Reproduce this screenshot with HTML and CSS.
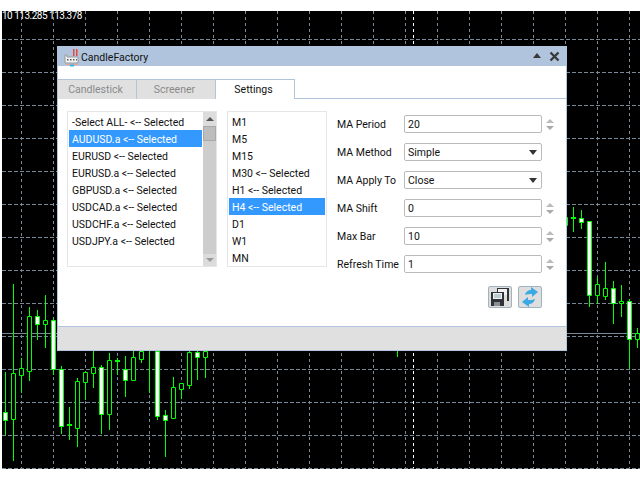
FILE: index.html
```html
<!DOCTYPE html>
<html lang="en">
<head>
    <meta charset="UTF-8">
    <title>CandleFactory</title>
    <link rel="stylesheet" href="styles.css">
</head>
<body>
    <!-- chart behind the dialog -->
    <svg class="chart" width="640" height="480" viewBox="0 0 640 480">
        <rect class="chartBg" x="2" y="11" width="638" height="458"/>
        <path class="gridV" d="M21.5 11V468M53.5 11V468M85.5 11V468M117.5 11V468M149.5 11V468M181.5 11V468M213.5 11V468M245.5 11V468M277.5 11V468M309.5 11V468M341.5 11V468M373.5 11V468M405.5 11V468M437.5 11V468M469.5 11V468M501.5 11V468M533.5 11V468M565.5 11V468M597.5 11V468M629.5 11V468"/>
        <path class="gridH" d="M2 39.5H640M2 72.5H640M2 105.5H640M2 138.5H640M2 171.5H640M2 204.5H640M2 237.5H640M2 270.5H640M2 303.5H640M2 336.5H640M2 369.5H640M2 402.5H640M2 435.5H640M2 468.5H640"/>
        <path class="priceLine" d="M2 333.5H640"/>
        <path class="timeLine" d="M413.5 11V468"/>
        <path class="wick" d="M5.5 372V435M13.5 284V461M21.5 358V393M29.5 307V381M37.5 310V340M45.5 295V348M53.5 318V375M61.5 366V434M69.5 407V440M77.5 378V447M85.5 372V400M93.5 351V388M101.5 365V434M109.5 353V430M117.5 358V375M125.5 356V397M133.5 351V380M141.5 351V363M149.5 351V393M157.5 351V420M165.5 410V457M173.5 377V418M181.5 383V399M189.5 351V389M197.5 351V380M205.5 351V378M397.5 351V357M573.5 207V232M581.5 210V229M589.5 221V307M597.5 277V304M605.5 262V300M613.5 281V324M621.5 285V317M629.5 299V369M637.5 328V348"/>
        <path class="bull" d="M11.5 373.5h4v46h-4zM19.5 368.5h4v7h-4zM27.5 316.5h4v55h-4zM43.5 320.5h4v4h-4zM75.5 381.5h4v47h-4zM83.5 372.5h4v10h-4zM91.5 367.5h4v6h-4zM107.5 360.5h4v54h-4zM131.5 357.5h4v23h-4zM139.5 351.5h4v8h-4zM171.5 387.5h4v31h-4zM179.5 383.5h4v6h-4zM187.5 352.5h4v33h-4zM203.5 351.5h4v6h-4zM563.5 217.5h4v8h-4zM595.5 284.5h4v11h-4zM603.5 288.5h4v8h-4zM619.5 301.5h4v2h-4zM635.5 333.5h4v6h-4z"/>
        <path class="bear" d="M3.5 412.5h4v8h-4zM35.5 316.5h4v8h-4zM51.5 320.5h4v49h-4zM59.5 369.5h4v57h-4zM99.5 367.5h4v47h-4zM123.5 369.5h4v11h-4zM155.5 351.5h4v65h-4zM163.5 415.5h4v5h-4zM195.5 352.5h4v5h-4zM579.5 218.5h4v4h-4zM587.5 221.5h4v74h-4zM611.5 288.5h4v15h-4zM627.5 301.5h4v38h-4z"/>
        <path class="doji" d="M67 424h5v2h-5zM115 360h5v2h-5zM571 217h5v2h-5z"/>
    </svg>
    <div class="quote">10 113.285 113.378</div>

    <div class="window">
        <div class="titleBar">
            <svg class="appIcon" width="16" height="19" viewBox="0 0 16 19">
                <path d="M9 1h1.500v7H9zM12 1h1.500v7H12z" fill="#e8483c"/>
                <path d="M1 7h2v2h11v6H1z" fill="#f2f2f2" stroke="#9a9a9a"/>
                <path d="M3 11h1.500v1.500H3zM6 11h1.500v1.500H6zM9 11h1.500v1.500H9zM12 11h1v1.500h-1z" fill="#555"/>
                <path d="M2 16.500h12" stroke="#f0a090"/>
                <path d="M6 17.500h4" stroke="#30b8e0" stroke-width="2"/>
            </svg>
            <span class="appName">CandleFactory</span>
            <span class="collapseBtn"></span>
            <svg class="closeBtn" width="11" height="11" viewBox="0 0 11 11">
                <path d="M1.500 1.500l8 8M9.500 1.500l-8 8" stroke="#3a3a3a" stroke-width="2.400"/>
            </svg>
        </div>

        <ul class="tabs">
            <li>Candlestick</li>
            <li>Screener</li>
            <li class="active">Settings</li>
        </ul>

        <div class="page">
            <div class="listBox symbols">
                <ul class="rows">
                    <li>-Select ALL- &lt;-- Selected</li>
                    <li class="active">AUDUSD.a &lt;-- Selected</li>
                    <li>EURUSD &lt;-- Selected</li>
                    <li>EURUSD.a &lt;-- Selected</li>
                    <li>GBPUSD.a &lt;-- Selected</li>
                    <li>USDCAD.a &lt;-- Selected</li>
                    <li>USDCHF.a &lt;-- Selected</li>
                    <li>USDJPY.a &lt;-- Selected</li>
                </ul>
                <div class="scrollBar">
                    <div class="scrollBtn"><span class="arrowUp"></span></div>
                    <div class="scrollThumb"></div>
                    <div class="scrollBtn last"><span class="arrowDown"></span></div>
                </div>
            </div>

            <div class="listBox periods">
                <ul class="rows">
                    <li>M1</li>
                    <li>M5</li>
                    <li>M15</li>
                    <li>M30 &lt;-- Selected</li>
                    <li>H1 &lt;-- Selected</li>
                    <li class="active">H4 &lt;-- Selected</li>
                    <li>D1</li>
                    <li>W1</li>
                    <li>MN</li>
                </ul>
            </div>

            <div class="settings">
                <div class="form">
                    <label>MA Period</label>
                    <div class="field">20</div>
                    <div class="spin"><span></span><span></span></div>

                    <label>MA Method</label>
                    <div class="field combo">Simple</div>
                    <div></div>

                    <label>MA Apply To</label>
                    <div class="field combo">Close</div>
                    <div></div>

                    <label>MA Shift</label>
                    <div class="field">0</div>
                    <div class="spin"><span></span><span></span></div>

                    <label>Max Bar</label>
                    <div class="field">10</div>
                    <div class="spin"><span></span><span></span></div>

                    <label>Refresh Time</label>
                    <div class="field">1</div>
                    <div class="spin"><span></span><span></span></div>
                </div>
                <div class="actions">
                    <div class="iconBtn">
                        <svg width="18" height="18" viewBox="0 0 18 18">
                            <path d="M6 0h12v13h-2V4H6z" fill="#333"/>
                            <path d="M7 1h9v6H7z" fill="#eef2f5"/>
                            <path d="M0 4h13v14H0z" fill="#2f3236"/>
                            <path d="M2 5h9v6H2z" fill="#eef2f5"/>
                            <path d="M3 7h7M3 9h7" stroke="#8aa" stroke-width="1"/>
                            <path d="M3 14h6v4H3z" fill="#8b8f93"/>
                        </svg>
                    </div>
                    <div class="iconBtn">
                        <svg width="18" height="20" viewBox="0 0 18 20">
                            <path d="M4 8C5 4 8 3 10 3V0L17 5L11 10V7C8 7 6 7 4 8z" fill="#3aa9e4"/>
                            <path d="M14 12C13 16 10 17 8 17V20L1 15L7 10V13C10 13 12 13 14 12z" fill="#3aa9e4"/>
                        </svg>
                    </div>
                </div>
            </div>
        </div>

        <div class="statusBar"></div>
    </div>
</body>
</html>
```

FILE: styles.css
```css
* {
    margin: 0;
    padding: 0;
    box-sizing: border-box;
    list-style: none;
}

body {
    position: relative;
    width: 640px;
    height: 480px;
    overflow: hidden;
    background-color: white;
    font-family: Roboto, sans-serif;
    font-size: 10.5px;
    color: #111;
}

.chart {
    position: absolute;
    top: 0;
    left: 0;
    fill: none;
}

.chart .chartBg {
    fill: black;
}

.chart .gridV {
    stroke: #778899;
    stroke-dasharray: 3 3;
}

.chart .gridH {
    stroke: #778899;
    stroke-dasharray: 4 2;
}

.chart .priceLine {
    stroke: #778899;
}

.chart .timeLine {
    stroke: white;
    stroke-dasharray: 3 3;
}

.chart .wick {
    stroke: #00ff00;
}

.chart .bull {
    fill: black;
    stroke: #00ff00;
}

.chart .bear {
    fill: white;
    stroke: #00ff00;
}

.chart .doji {
    fill: #00ff00;
}

.quote {
    position: absolute;
    top: 9px;
    left: 2px;
    color: white;
    font-size: 10px;
    line-height: 14px;
    letter-spacing: -0.5px;
    white-space: nowrap;
}

.window {
    position: absolute;
    top: 46px;
    left: 57px;
    display: flex;
    flex-direction: column;
    width: 510px;
    height: 305px;
    border: 1px solid #b0c4de;
    border-top: 0;
    background-color: white;
}

.titleBar {
    display: flex;
    align-items: flex-start;
    height: 20px;
    padding-left: 6px;
    background-color: #b0c4de;
}

.appIcon {
    margin-top: 2px;
}

.appName {
    margin-left: 1px;
    line-height: 23px;
}

.collapseBtn {
    margin-left: auto;
    margin-top: 7px;
    border-left: 4px solid transparent;
    border-right: 4px solid transparent;
    border-bottom: 5px solid #3a3a3a;
}

.closeBtn {
    margin: 5px 6px 0 8px;
}

.tabs {
    display: flex;
    height: 20px;
    margin-top: 13px;
    border-bottom: 1px solid #b0c4de;
}

.tabs li {
    width: 79px;
    height: 20px;
    padding-right: 3px;
    border-top: 1px solid #b0c4de;
    border-right: 1px solid #b0c4de;
    background-color: #e0e0e0;
    color: #8a8a8a;
    text-align: center;
    line-height: 19px;
}

.tabs li.active {
    border-left: 0;
    background-color: white;
    color: #111;
}

.page {
    display: flex;
    flex: 1;
    align-items: flex-start;
    padding: 12px 0 0 9px;
}

.listBox {
    display: flex;
    height: 156px;
    border: 1px solid #e6e6e6;
}

.symbols {
    width: 150px;
}

.periods {
    width: 100px;
    margin-left: 10px;
}

.rows {
    flex: 1;
    padding: 1px 1px 0;
}

.rows li {
    height: 17px;
    padding: 2px 0 0 3px;
    line-height: 16px;
    white-space: nowrap;
}

.rows li.active {
    background-color: #3399ff;
    color: white;
}

.scrollBar {
    display: flex;
    flex-direction: column;
    width: 13px;
    background-color: #cdcdcd;
}

.scrollBtn {
    display: flex;
    align-items: center;
    justify-content: center;
    height: 14px;
    background-color: #dcdcdc;
}

.scrollBtn.last {
    margin-top: auto;
    height: 12px;
}

.scrollThumb {
    height: 15px;
    border: 1px solid #a9a9a9;
    background-color: #bdbdbd;
}

.arrowUp {
    border-left: 4px solid transparent;
    border-right: 4px solid transparent;
    border-bottom: 4px solid #555;
}

.arrowDown {
    border-left: 4px solid transparent;
    border-right: 4px solid transparent;
    border-top: 4px solid #999;
}

.settings {
    width: 228px;
    margin-left: 10px;
    padding-top: 4px;
}

.form {
    display: grid;
    grid-template-columns: 67px 138px 14px;
    grid-auto-rows: 18px;
    row-gap: 10px;
    align-items: center;
}

.form label {
    padding-top: 1px;
    white-space: nowrap;
}

.field {
    position: relative;
    height: 18px;
    padding-left: 3px;
    border: 1px solid #bbb;
    border-radius: 2px;
    line-height: 18px;
}

.combo::after {
    content: "";
    position: absolute;
    top: 6px;
    right: 4px;
    border-left: 4px solid transparent;
    border-right: 4px solid transparent;
    border-top: 5px solid #333;
}

.spin {
    display: flex;
    flex-direction: column;
    align-items: center;
    gap: 3px;
    padding-left: 2px;
}

.spin span {
    border-left: 4px solid transparent;
    border-right: 4px solid transparent;
    border-bottom: 4px solid #bbb;
}

.spin span:last-child {
    border-bottom: 0;
    border-top: 4px solid #aaa;
}

.actions {
    display: flex;
    justify-content: flex-end;
    gap: 6px;
    width: 205px;
    margin-top: 13px;
}

.iconBtn {
    display: flex;
    align-items: center;
    justify-content: center;
    width: 24px;
    height: 22px;
    border: 1px solid #9fb3c0;
    border-radius: 2px;
    background-color: #dedede;
}

.statusBar {
    height: 24px;
    border-top: 1px solid #b0c4de;
    background-color: #e0e0e0;
}
```
